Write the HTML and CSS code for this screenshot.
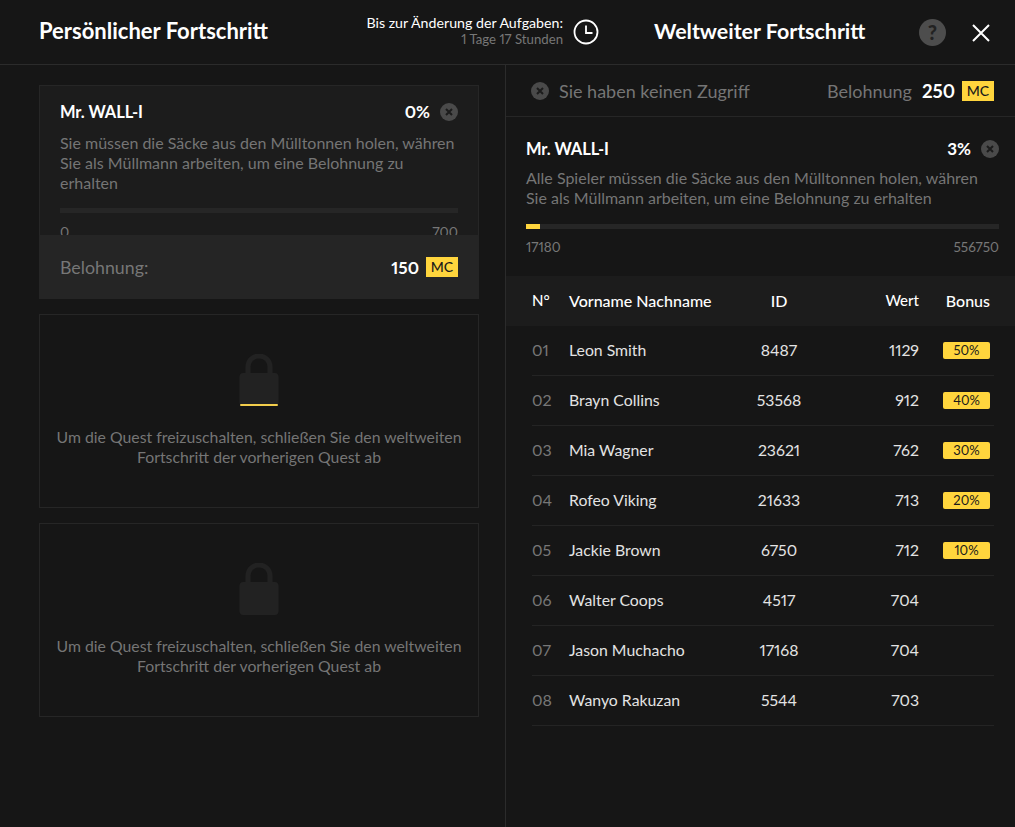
FILE: index.html
```html
<!DOCTYPE html>
<html lang="de">
<head>
<meta charset="utf-8">
<title>Fortschritt</title>
<link rel="stylesheet" href="styles.css">
</head>
<body>
<svg class="defs" width="0" height="0" aria-hidden="true">
  <symbol id="x-badge" viewBox="0 0 18 18">
    <circle cx="9" cy="9" r="9" fill="#4a4a4a"/>
    <path d="M6 6l6 6M12 6l-6 6" stroke="#1c1c1c" stroke-width="2" fill="none"/>
  </symbol>
  <symbol id="lock" viewBox="0 0 40 52">
    <path d="M9 20V12.500C9 6.500 14 2 20 2s11 4.500 11 10.500V20" fill="none" stroke="#222" stroke-width="5"/>
    <rect x="0.500" y="19" width="39" height="33" rx="4" fill="#222"/>
  </symbol>
</svg>
<div class="app">
  <header class="top">
    <h1 class="title title-left">Persönlicher Fortschritt</h1>
    <div class="timer">
      <div class="timer-text">
        <div class="timer-label">Bis zur Änderung der Aufgaben:</div>
        <div class="timer-value">1 Tage 17 Stunden</div>
      </div>
      <svg class="clock" width="26" height="26" viewBox="0 0 26 26"><circle cx="13" cy="13" r="11.500" fill="none" stroke="#fff" stroke-width="1.800"/><path d="M13 6.500V14h6.500" fill="none" stroke="#fff" stroke-width="1.800"/></svg>
    </div>
    <h1 class="title title-right">Weltweiter Fortschritt</h1>
    <div class="help">?</div>
    <svg class="close" width="20" height="20" viewBox="0 0 20 20"><path d="M2 2l16 16M18 2L2 18" stroke="#fff" stroke-width="2" fill="none"/></svg>
  </header>
  <main class="columns">
    <section class="left">
      <article class="card">
        <div class="card-body">
          <div class="quest-head">
            <span class="quest-name">Mr. WALL-I</span>
            <span class="quest-pct">0%</span>
            <svg class="x-icon" width="18" height="18"><use href="#x-badge"/></svg>
          </div>
          <p class="quest-desc">Sie müssen die Säcke aus den Mülltonnen holen, währen Sie als Müllmann arbeiten, um eine Belohnung zu erhalten</p>
          <div class="bar bar-left"></div>
          <div class="range"><span>0</span><span>700</span></div>
        </div>
        <div class="card-foot">
          <span class="foot-label">Belohnung:</span>
          <span class="amount">150</span>
          <span class="mc">MC</span>
        </div>
      </article>
      <article class="locked">
        <div class="lock-wrap">
          <svg class="lock" width="40" height="52"><use href="#lock"/></svg>
          <span class="lock-line"></span>
        </div>
        <p class="locked-text">Um die Quest freizuschalten, schließen Sie den weltweiten<br>Fortschritt der vorherigen Quest ab</p>
      </article>
      <article class="locked">
        <div class="lock-wrap">
          <svg class="lock" width="40" height="52"><use href="#lock"/></svg>
        </div>
        <p class="locked-text">Um die Quest freizuschalten, schließen Sie den weltweiten<br>Fortschritt der vorherigen Quest ab</p>
      </article>
    </section>
    <section class="right">
      <div class="access">
        <svg class="x-icon" width="18" height="18"><use href="#x-badge"/></svg>
        <span class="access-text">Sie haben keinen Zugriff</span>
        <span class="reward-label">Belohnung</span>
        <span class="amount amount-big">250</span>
        <span class="mc">MC</span>
      </div>
      <div class="global">
        <div class="quest-head">
          <span class="quest-name">Mr. WALL-I</span>
          <span class="quest-pct">3%</span>
          <svg class="x-icon" width="18" height="18"><use href="#x-badge"/></svg>
        </div>
        <p class="quest-desc">Alle Spieler müssen die Säcke aus den Mülltonnen holen, währen Sie als Müllmann arbeiten, um eine Belohnung zu erhalten</p>
        <div class="bar bar-right"><div class="bar-fill" style="width:3%"></div></div>
        <div class="range range-right"><span>17180</span><span>556750</span></div>
      </div>
      <div class="table">
        <div class="row head">
          <span class="c-no">N°</span><span>Vorname Nachname</span><span class="c-id">ID</span><span class="c-val">Wert</span><span class="c-bonus">Bonus</span>
        </div>
        <div class="row"><span class="c-no">01</span><span>Leon Smith</span><span class="c-id">8487</span><span class="c-val">1129</span><span class="pill">50%</span></div>
        <div class="row"><span class="c-no">02</span><span>Brayn Collins</span><span class="c-id">53568</span><span class="c-val">912</span><span class="pill">40%</span></div>
        <div class="row"><span class="c-no">03</span><span>Mia Wagner</span><span class="c-id">23621</span><span class="c-val">762</span><span class="pill">30%</span></div>
        <div class="row"><span class="c-no">04</span><span>Rofeo Viking</span><span class="c-id">21633</span><span class="c-val">713</span><span class="pill">20%</span></div>
        <div class="row"><span class="c-no">05</span><span>Jackie Brown</span><span class="c-id">6750</span><span class="c-val">712</span><span class="pill">10%</span></div>
        <div class="row"><span class="c-no">06</span><span>Walter Coops</span><span class="c-id">4517</span><span class="c-val">704</span></div>
        <div class="row"><span class="c-no">07</span><span>Jason Muchacho</span><span class="c-id">17168</span><span class="c-val">704</span></div>
        <div class="row"><span class="c-no">08</span><span>Wanyo Rakuzan</span><span class="c-id">5544</span><span class="c-val">703</span></div>
      </div>
    </section>
  </main>
</div>
</body>
</html>
```
FILE: styles.css
```css
* { box-sizing: border-box; }
html, body { margin: 0; height: 100%; }
body {
  background: #161616;
  color: #fff;
  font-family: Lato, "Open Sans", sans-serif;
  font-size: 15px;
  font-variant-numeric: proportional-nums;
  overflow: hidden;
}
.defs { position: absolute; }
.app { width: 1015px; height: 827px; display: flex; flex-direction: column; }

.top {
  height: 65px;
  flex: none;
  display: flex;
  align-items: center;
  border-bottom: 1px solid #2b2b2b;
  padding-left: 39px;
}
.title { margin: 0 0 2px; font-weight: 700; line-height: 26px; white-space: nowrap; }
.title-left { width: 320px; font-size: 22px; }
.timer { display: flex; align-items: center; width: 240px; justify-content: flex-end; }
.timer-text { text-align: right; margin: 0 10px 2px 0; white-space: nowrap; }
.timer-label { font-size: 14.200px; line-height: 17px; }
.timer-value { font-size: 13.200px; line-height: 17px; color: #777; }
.clock { flex: none; }
.title-right { margin-left: 55px; width: 265px; font-size: 21.400px; }
.help {
  width: 27px; height: 27px; border-radius: 50%;
  background: #4d4d4d; color: #222;
  font-size: 20px; font-weight: 900; line-height: 27px; text-align: center;
}
.close { margin: 2px 0 0 25px; }

.columns { flex: 1; display: flex; min-height: 0; }
.left { width: 505px; flex: none; padding: 20px 26px 0 39px; display: flex; flex-direction: column; gap: 15px; }
.right { flex: 1; border-left: 1px solid #2b2b2b; min-width: 0; }

.card { height: 214px; background: #1c1c1c; border: 1px solid #262626; border-bottom: 0; display: flex; flex-direction: column; }
.card-body { height: 149px; padding: 15px 20px 0; overflow: hidden; flex: none; }
.quest-head { display: flex; align-items: center; height: 22px; }
.quest-name { font-size: 16.500px; font-weight: 700; flex: 1; letter-spacing: -0.100px; }
.quest-pct { font-size: 17px; font-weight: 700; margin: 0 10px 1px 0; }
.x-icon { flex: none; }
.quest-desc { margin: 10px 0 0; color: #757575; font-size: 16px; line-height: 20px; }
.bar { height: 5px; background: #262626; }
.bar-left { margin-top: 15px; }
.range { display: flex; justify-content: space-between; color: #777; font-size: 14px; line-height: 17px; margin-top: 10px; }

.card-foot { flex: 1; background: #252525; margin: 0 -1px; padding: 0 21px; display: flex; align-items: center; }
.foot-label { flex: 1; color: #777; font-size: 17.800px; }
.amount { font-size: 17px; font-weight: 700; margin-right: 7px; }
.amount-big { font-size: 18.500px; }
.mc { background: #ffd53d; color: #1a1a1a; width: 32px; height: 20px; font-size: 14px; line-height: 20px; text-align: center; font-weight: 500; }

.locked { height: 194px; border: 1px solid #262626; text-align: center; padding-top: 39px; }
.lock-wrap { position: relative; width: 40px; height: 52px; margin: 0 auto; }
.lock { display: block; }
.lock-line { position: absolute; left: 1px; right: 1px; bottom: 0; height: 2px; border-radius: 1px; background: #f2cd4c; }
.locked-text { margin: 21px 0 0; color: #757575; font-size: 15.800px; line-height: 20px; }

.access { height: 52px; display: flex; align-items: center; padding: 0 21px 0 25px; border-bottom: 1px solid #262626; }
.access-text { flex: 1; margin-left: 10px; color: #757575; font-size: 18px; }
.reward-label { color: #757575; font-size: 18px; margin-right: 10px; }

.global { height: 159px; padding: 21px 16px 0 20px; }
.global .quest-desc { margin-top: 8px; }
.bar-right { margin-top: 16px; }
.bar-fill { height: 100%; background: #ffd53d; }
.range-right { margin-top: 10px; font-size: 13.500px; }

.row {
  height: 50px;
  margin: 0 21px 0 26px;
  padding-bottom: 2px;
  display: grid;
  grid-template-columns: 37px 150px 120px 80px 24px 47px;
  align-items: center;
  border-bottom: 1px solid #242424;
  font-size: 15.800px;
  color: #e3e3e3;
}
.head { background: #1c1c1c; margin: 0; padding: 0 21px 2px 26px; border-bottom: 0; color: #fff; font-weight: 500; font-size: 16px; }
.c-no { color: #777; width: 16px; text-align: center; white-space: nowrap; font-size: 16px; }
.head .c-no { color: #fff; font-size: 15px; }
.c-id { text-align: center; }
.c-val { text-align: right; }
.head .c-val { font-size: 15px; }
.c-bonus { grid-column: 6; text-align: right; white-space: nowrap; }
.pill { grid-column: 6; height: 17px; margin-top: 2px; border-radius: 2px; background: #ffd53d; color: #1a1a1a; font-size: 13px; line-height: 17px; text-align: center; }
```
